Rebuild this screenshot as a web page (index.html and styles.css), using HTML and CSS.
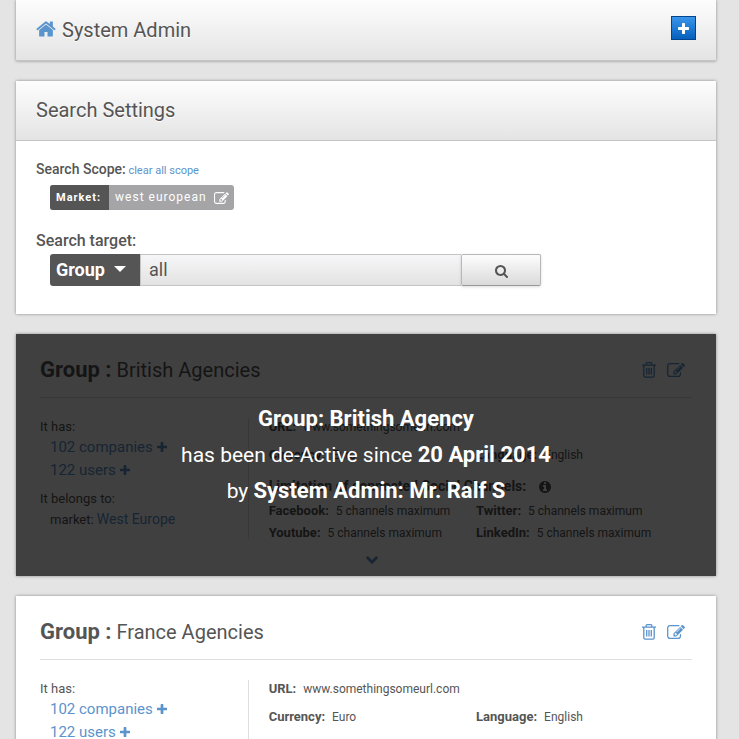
FILE: index.html
```html
<!DOCTYPE html>
<html lang="en">
<head>
<meta charset="utf-8">
<title>System Admin</title>
<link rel="stylesheet" href="styles.css">
</head>
<body>
<svg class="sprite" aria-hidden="true">
  <symbol id="home" viewBox="64 224 1664 1344"><path d="M1472 992v480q0 26-19 45t-45 19h-384v-384h-256v384h-384q-26 0-45-19t-19-45v-480q0-1 .5-3t.5-3l575-474 575 474q1 2 1 6zm223-69l-62 74q-8 9-21 11h-3q-13 0-21-7l-692-577-692 577q-12 8-24 7-13-2-21-11l-62-74q-8-10-7-23.5t11-21.5l719-599q32-26 76-26t76 26l244 204v-195q0-14 9-23t23-9h192q14 0 23 9t9 23v408l219 182q10 8 11 21.5t-7 23.5z"/></symbol>
  <symbol id="plus" viewBox="192 128 1408 1408"><path d="M1600 736v192q0 40-28 68t-68 28h-416v416q0 40-28 68t-68 28h-192q-40 0-68-28t-28-68v-416h-416q-40 0-68-28t-28-68v-192q0-40 28-68t68-28h416v-416q0-40 28-68t68-28h192q40 0 68 28t28 68v416h416q40 0 68 28t28 68z"/></symbol>
  <symbol id="search" viewBox="64 128 1664 1664"><path d="M1216 832q0-185-131.5-316.5t-316.5-131.5-316.5 131.5-131.5 316.5 131.5 316.5 316.5 131.5 316.5-131.5 131.5-316.5zm512 832q0 52-38 90t-90 38q-54 0-90-38l-343-342q-179 124-399 124-143 0-273.5-55.5t-225-150-150-225-55.5-273.5 55.5-273.5 150-225 225-150 273.5-55.5 273.5 55.5 225 150 150 225 55.5 273.5q0 220-124 399l343 343q37 37 37 90z"/></symbol>
  <symbol id="edit" viewBox="0 128 1792 1408"><path d="M888 1184l116-116-152-152-116 116v56h96v96h56zm440-720q-16-16-33 1l-350 350q-17 17-1 33t33-1l350-350q17-17 1-33zm80 594v190q0 119-84.5 203.5t-203.5 84.5h-832q-119 0-203.5-84.5t-84.5-203.5v-832q0-119 84.5-203.5t203.5-84.5h832q63 0 117 25 15 7 18 23 3 17-9 29l-49 49q-14 14-32 8-23-6-45-6h-832q-66 0-113 47t-47 113v832q0 66 47 113t113 47h832q66 0 113-47t47-113v-126q0-13 9-22l64-64q15-15 35-7t20 29zm-96-738l288 288-672 672h-288v-288zm444 132l-92 92-288-288 92-92q28-28 68-28t68 28l152 152q28 28 28 68t-28 68z"/></symbol>
  <symbol id="info" viewBox="128 128 1536 1536"><path d="M1152 1376v-160q0-14-9-23t-23-9h-96v-512q0-14-9-23t-23-9h-320q-14 0-23 9t-9 23v160q0 14 9 23t23 9h96v320h-96q-14 0-23 9t-9 23v160q0 14 9 23t23 9h448q14 0 23-9t9-23zm-128-896v-160q0-14-9-23t-23-9h-192q-14 0-23 9t-9 23v160q0 14 9 23t23 9h192q14 0 23-9t9-23zm640 416q0 209-103 385.5t-279.5 279.5-385.5 103-385.5-103-279.5-279.5-103-385.5 103-385.5 279.5-279.5 385.5-103 385.5 103 279.5 279.5 103 385.5z"/></symbol>
  <symbol id="chevron" viewBox="90 533 1612 1035"><path d="M1683 808l-742 741q-19 19-45 19t-45-19l-742-741q-19-19-19-45.5t19-45.5l166-165q19-19 45-19t45 19l531 531 531-531q19-19 45-19t45 19l166 165q19 19 19 45.5t-19 45.5z"/></symbol>
  <symbol id="trash" viewBox="0 0 14 16"><path fill="none" stroke="currentColor" stroke-width="1.3" d="M0 3.2h14M4.2 3V1.6q0-.9.9-.9h3.8q.9 0 .9.9V3M1.8 3.4v10.4q0 1.4 1.4 1.4h7.6q1.4 0 1.4-1.4V3.4M4.7 6v6.6M7 6v6.6M9.3 6v6.6"/></symbol>
</svg>

<header class="panel bar panel-head">
  <h1 class="title"><svg class="icon icon-home"><use href="#home"/></svg>System Admin</h1>
  <button class="add" type="button" aria-label="Add"><svg class="icon icon-plus"><use href="#plus"/></svg></button>
</header>

<section class="panel">
  <div class="panel-head"><h2 class="title">Search Settings</h2></div>
  <form class="settings">
    <p class="scope"><strong>Search Scope:</strong> <a href="#clear">clear all scope</a></p>
    <div class="tag">
      <span class="tag-name">Market:</span>
      <span class="tag-value">west european <button class="plain" type="button" aria-label="Edit market"><svg class="icon icon-tag"><use href="#edit"/></svg></button></span>
    </div>
    <label class="target" for="query">Search target:</label>
    <div class="search">
      <div class="kind">
        <select aria-label="Target type"><option>Group</option></select>
      </div>
      <input id="query" type="text" value="all">
      <button type="submit" aria-label="Search"><svg class="icon icon-search"><use href="#search"/></svg></button>
    </div>
  </form>
</section>

<article class="panel card">
  <div class="card-head">
    <h2><strong>Group :</strong> British Agencies</h2>
    <div class="actions">
      <button class="plain" type="button" aria-label="Delete"><svg class="icon icon-trash"><use href="#trash"/></svg></button>
      <button class="plain" type="button" aria-label="Edit"><svg class="icon icon-edit"><use href="#edit"/></svg></button>
    </div>
  </div>
  <div class="card-body">
    <div class="relations">
      <p>It has:</p>
      <ul>
        <li><a href="#companies">102 companies <svg class="icon icon-more"><use href="#plus"/></svg></a></li>
        <li><a href="#users">122 users <svg class="icon icon-more"><use href="#plus"/></svg></a></li>
      </ul>
      <p>It belongs to:</p>
      <p class="belongs">market: <a href="#market">West Europe</a></p>
    </div>
    <div class="details">
      <p class="wide"><strong>URL:</strong> www.somethingsomeurl.com</p>
      <p><strong>Currency:</strong> Euro</p>
      <p><strong>Language:</strong> English</p>
      <p class="wide limits"><strong>Limitation of connected Social Channels:</strong> <svg class="icon icon-info"><use href="#info"/></svg></p>
      <p class="channel"><strong>Facebook:</strong> 5 channels maximum</p>
      <p class="channel"><strong>Twitter:</strong> 5 channels maximum</p>
      <p class="channel"><strong>Youtube:</strong> 5 channels maximum</p>
      <p class="channel"><strong>LinkedIn:</strong> 5 channels maximum</p>
    </div>
  </div>
  <button class="plain expand" type="button" aria-label="Show more"><svg class="icon icon-chevron"><use href="#chevron"/></svg></button>
  <div class="overlay">
    <p><strong>Group: British Agency</strong><br>has been de-Active since <strong>20 April 2014</strong><br>by <strong>System Admin: Mr. Ralf S</strong></p>
  </div>
</article>

<article class="panel card">
  <div class="card-head">
    <h2><strong>Group :</strong> France Agencies</h2>
    <div class="actions">
      <button class="plain" type="button" aria-label="Delete"><svg class="icon icon-trash"><use href="#trash"/></svg></button>
      <button class="plain" type="button" aria-label="Edit"><svg class="icon icon-edit"><use href="#edit"/></svg></button>
    </div>
  </div>
  <div class="card-body">
    <div class="relations">
      <p>It has:</p>
      <ul>
        <li><a href="#fr-companies">102 companies <svg class="icon icon-more"><use href="#plus"/></svg></a></li>
        <li><a href="#fr-users">122 users <svg class="icon icon-more"><use href="#plus"/></svg></a></li>
      </ul>
    </div>
    <div class="details">
      <p class="wide"><strong>URL:</strong> www.somethingsomeurl.com</p>
      <p><strong>Currency:</strong> Euro</p>
      <p><strong>Language:</strong> English</p>
    </div>
  </div>
</article>
</body>
</html>
```
FILE: styles.css
```css
* { box-sizing: border-box; }

body {
  margin: 0;
  padding: 0 23px 0 16px;
  height: 100vh;
  overflow: hidden;
  background: #e4e4e4;
  color: #555;
  font: 12px/20px Roboto, "Noto Sans", sans-serif;
}

h1, h2, p, ul { margin: 0; padding: 0; font-weight: 400; }
ul { list-style: none; }
strong { font-weight: 700; }
a { color: #5b93cc; text-decoration: none; }
button, input, select { font: inherit; color: inherit; margin: 0; }
.sprite { display: none; }
.icon { fill: currentColor; display: inline-block; }
.plain { padding: 0; border: 0; background: none; color: inherit; display: inline-flex; }

.panel {
  position: relative;
  margin-bottom: 20px;
  background: #fff;
  box-shadow: 0 0 3px rgba(0, 0, 0, .4);
}

.panel-head {
  display: flex;
  align-items: center;
  justify-content: space-between;
  height: 60px;
  padding: 0 20px 2px;
  border-bottom: 1px solid #c4c4c4;
  background: linear-gradient(#fdfdfd, #e4e4e4);
}

.bar { height: 61px; padding-bottom: 0; }
.title { font-size: 20px; line-height: 28px; text-shadow: 0 1px 0 #fff; }
.icon-home { width: 20px; height: 16px; margin-right: 6px; color: #5b93cc; }

.add {
  display: flex;
  align-items: center;
  justify-content: center;
  width: 25px;
  height: 24px;
  margin-bottom: 4px;
  padding: 0;
  border: 1px solid #00458c;
  background: linear-gradient(#3b95ea, #0560bd);
  color: #fff;
}
.icon-plus { width: 11px; height: 11px; }

.settings { padding: 17px 20px 28px; }
.scope { font-size: 11px; line-height: 22px; }
.scope strong { font-size: 14px; font-weight: 500; }

.tag {
  display: inline-flex;
  height: 25px;
  margin: 3px 0 0 14px;
  border-radius: 3px;
  overflow: hidden;
  background: #a5a5a7;
  color: #fff;
  font-size: 11px;
  line-height: 25px;
  letter-spacing: 1px;
  vertical-align: top;
}
.tag-name { padding: 0 8px 0 6px; background: #555; font-weight: 700; }
.tag-value { display: flex; align-items: center; gap: 7px; padding: 0 5px 0 6px; font-size: 12px; }
.icon-tag { width: 15px; height: 12px; }

.target { display: block; margin: 20px 0 3px; font-size: 16px; line-height: 21px; font-weight: 500; }
.search { display: flex; width: calc(75% - 4px); height: 32px; margin-left: 14px; }
.kind { position: relative; width: 90px; }
.kind::after {
  content: "";
  position: absolute;
  top: 12px;
  right: 14px;
  border: 6px solid transparent;
  border-top-color: #fff;
  border-bottom: 0;
  pointer-events: none;
}
.kind select {
  width: 100%;
  height: 32px;
  padding: 0 6px;
  border: 0;
  border-radius: 3px 0 0 3px;
  appearance: none;
  background: #555;
  color: #fff;
  font-size: 18px;
  font-weight: 700;
}
.search input {
  flex: 1;
  min-width: 0;
  padding: 0 8px;
  border: 1px solid #c4c4c4;
  border-right: 0;
  border-radius: 0;
  background: linear-gradient(#f6f6f8, #e3e3e3);
  font-size: 18px;
}
.search button {
  display: flex;
  align-items: center;
  justify-content: center;
  width: 80px;
  padding: 2px 0 0;
  border: 1px solid #b8b8b8;
  border-bottom-color: #999;
  border-radius: 2px;
  background: linear-gradient(#fdfdfd, #dadada);
  box-shadow: 0 1px 3px rgba(0, 0, 0, .15);
}
.icon-search { width: 13px; height: 13px; }

.card { padding: 0 24px 12px; }
.card-head {
  display: flex;
  align-items: center;
  justify-content: space-between;
  height: 64px;
  padding: 8px 7px 0 0;
  border-bottom: 1px solid #dedede;
}
.card-head h2 { font-size: 20px; line-height: 28px; }
.card-head strong { font-size: 22px; }
.actions { display: flex; align-items: center; gap: 11px; color: #5b93cc; }
.icon-trash { width: 14px; height: 16px; }
.icon-edit { width: 18px; height: 14px; }

.card-body { display: grid; grid-template-columns: 32% 1fr; align-items: start; margin-top: 20px; }
.relations { height: 121px; border-right: 1px solid #dedede; font-size: 13px; line-height: 18px; }
.relations ul { margin-bottom: 8px; }
.relations li { padding-left: 10px; font-size: 15px; line-height: 23px; }
.relations .belongs { padding-left: 10px; line-height: 22px; }
.belongs a { font-size: 14px; }
.icon-more { width: 10px; height: 10px; }

.details {
  display: grid;
  grid-template-columns: 49% 51%;
  padding-left: 20px;
}
.details p { line-height: 18px; margin-bottom: 10px; white-space: nowrap; }
.details strong { margin-right: 4px; font-size: 13px; }
.details .wide { grid-column: 1 / -1; }
.details .limits { margin: 2px 0 3px; line-height: 20px; }
.details .limits strong { font-size: 14px; }
.details .channel { margin-bottom: 0; line-height: 22px; }
.icon-info { width: 12px; height: 12px; margin-left: 6px; vertical-align: -2px; }

.expand { display: flex; margin: 12px auto 0; padding-left: 12px; color: #5b93cc; }
.icon-chevron { width: 12px; height: 8px; }

.overlay {
  position: absolute;
  inset: 0;
  display: flex;
  align-items: center;
  justify-content: center;
  background: rgba(0, 0, 0, .75);
  color: #fff;
  font-size: 21px;
  line-height: 36px;
  text-align: center;
}
.overlay strong { font-size: 22px; }
```
